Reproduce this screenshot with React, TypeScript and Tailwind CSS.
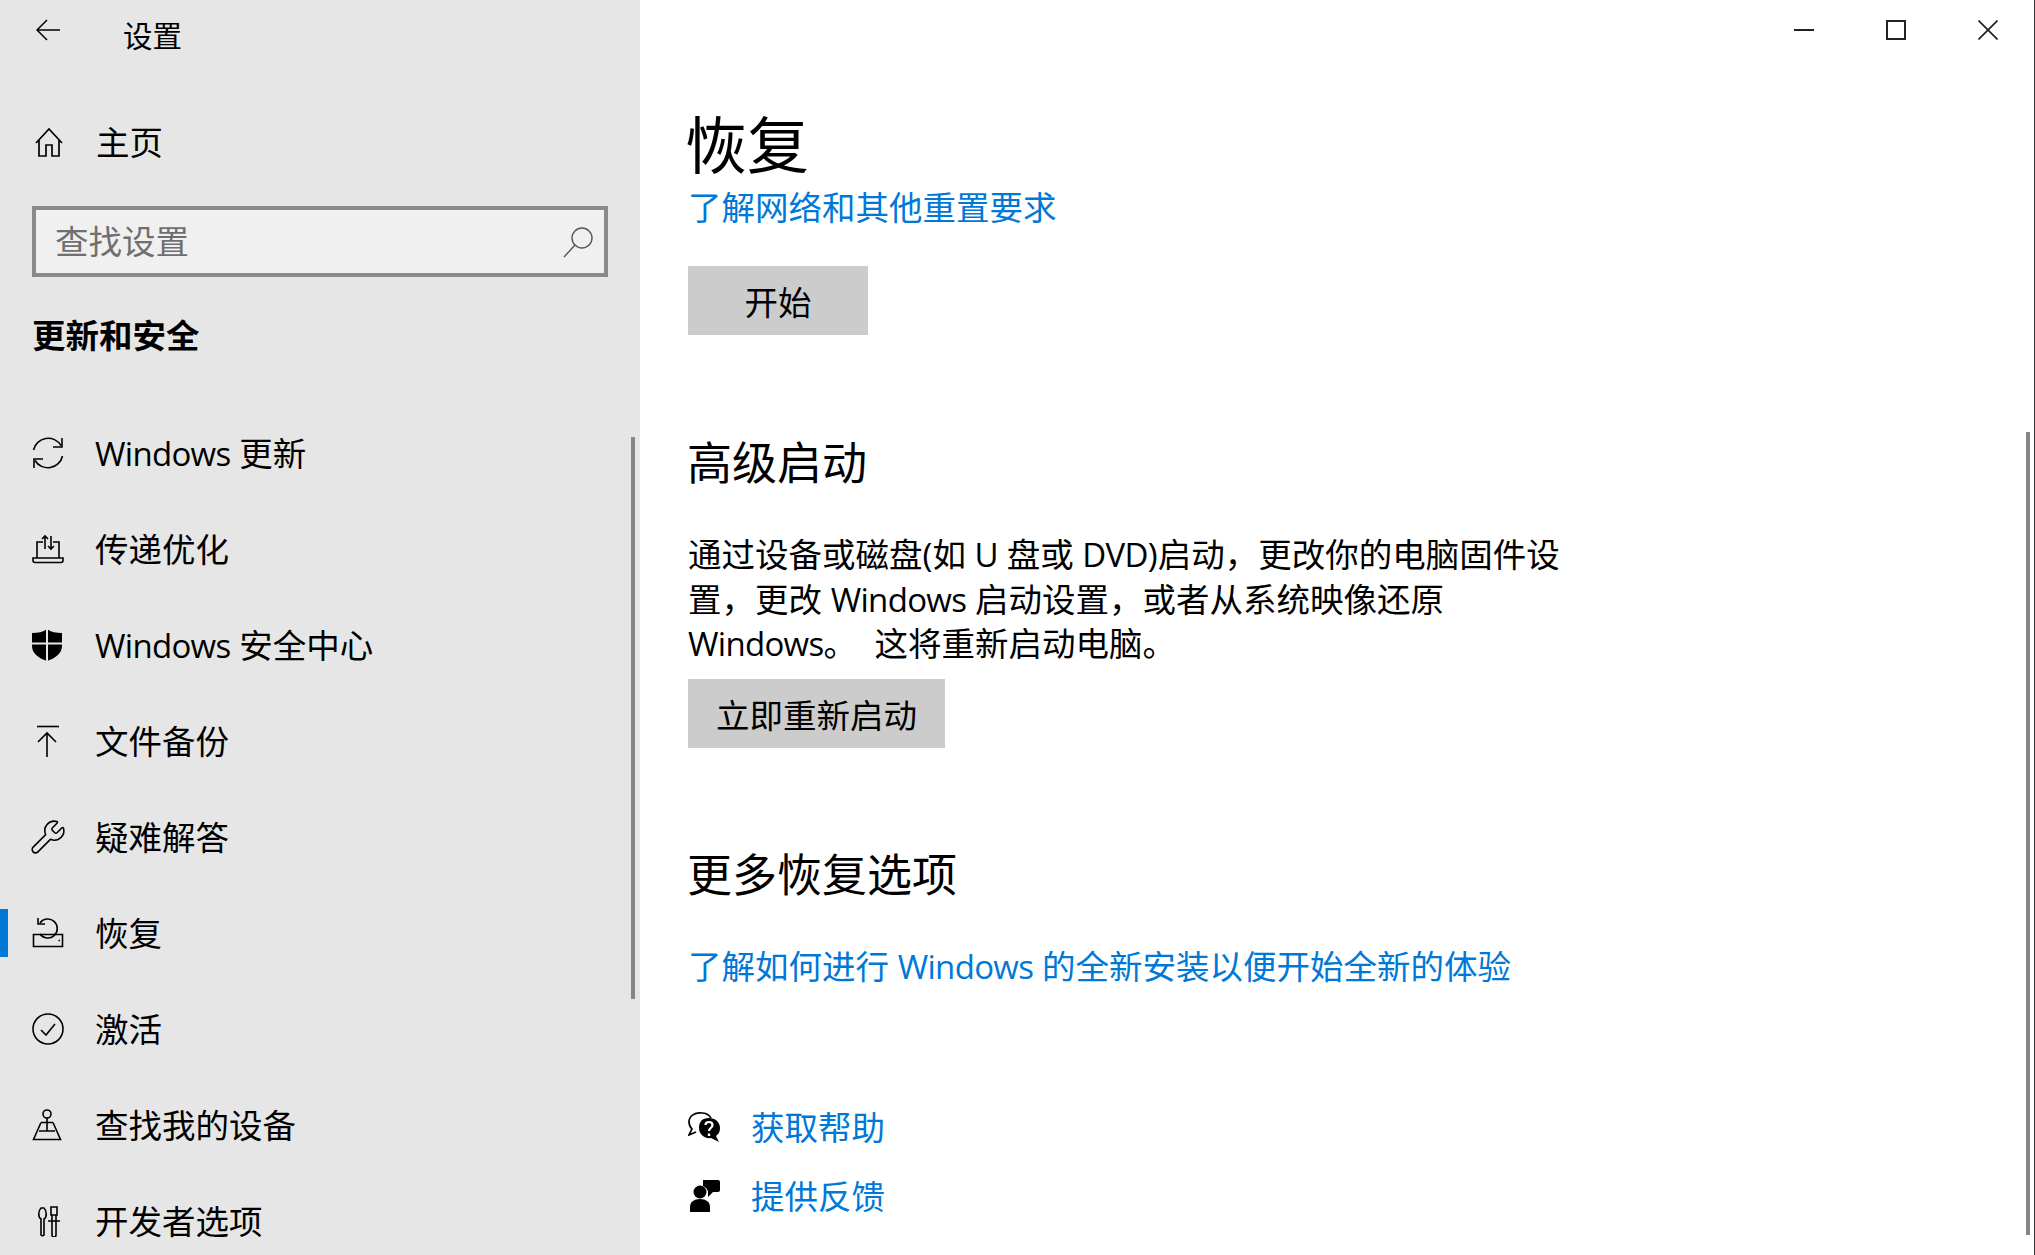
import React from "react";
import { Wrench } from "lucide-react";

type IconProps = { className?: string };

const Svg: React.FC<{ className?: string; children: React.ReactNode }> = ({ className, children }) => (
  <svg
    viewBox="0 0 32 32"
    fill="none"
    stroke="currentColor"
    strokeWidth="1.6"
    className={className ?? "w-8 h-8"}
  >
    {children}
  </svg>
);

const SyncIcon = () => (
  <Svg>
    <path d="M1.5 13A15 15 0 0 1 29 8.5" />
    <path d="M30 1v9h-9" />
    <path d="M30.5 19A15 15 0 0 1 3 23.5" />
    <path d="M2 31v-9h9" />
  </Svg>
);

const DeliveryIcon = () => (
  <Svg>
    <path d="M5 25V9h6M21 9h6v16" />
    <path d="M13 16V3M10 6l3-3 3 3M19 3v13M16 13l3 3 3-3" />
    <path d="M1 25h30v2.5a2 2 0 0 1-2 2H3a2 2 0 0 1-2-2z" />
  </Svg>
);

const ShieldIcon = () => (
  <svg viewBox="0 0 32 32" className="w-8 h-8">
    <path d="M15 0 C19 3 24 4 30 4 V17 C30 24 24 29 15 32 C6 29 0 24 0 17 V4 C6 4 11 3 15 0Z" fill="#000" />
    <path d="M15 0V32M0 14.5H30" stroke="#e6e6e6" strokeWidth="2" />
  </svg>
);

const BackupIcon = () => (
  <Svg>
    <path d="M5 1.5h22" />
    <path d="M15 33V9M6 17l9-9 9 9" />
  </Svg>
);

const RecoveryIcon = () => (
  <Svg>
    <path d="M1.5 17.5h29v12h-29z" />
    <path d="M8 17a9.5 9.5 0 1 0 0-11" />
    <path d="M6 1v6h7" />
    <path d="M26.5 23.5h1.5" />
  </Svg>
);

const ActivateIcon = () => (
  <Svg>
    <circle cx="16" cy="16" r="15" />
    <path d="M9 17l5 5 9-11" />
  </Svg>
);

const FindIcon = () => (
  <Svg>
    <circle cx="15" cy="5" r="4" />
    <path d="M15 9v13M9 13.5h12M9 13.5L1.5 30.5h27L21 13.5M7 22h16" />
  </Svg>
);

const DevIcon = () => (
  <Svg>
    <path d="M9 30a2 2 0 0 0 3 0V14c3-2 3-8 0-11h-3c-3 3-3 9 0 11z" />
    <path d="M20 30a2 2 0 0 0 4 0V10h-4zM19 2h6v8h-6zM16 16h12" />
  </Svg>
);

const WrenchIcon = ({ className }: IconProps) => (
  <Wrench size={38} strokeWidth={1} className={`shrink-0 max-w-none ${className ?? ""}`} />
);

const HelpIcon = () => (
  <svg viewBox="0 0 32 32" className="w-8 h-8 shrink-0">
    <path
      d="M14 2C7 1 1 5 1 11c0 3 1 5 3 7L1 24l7-3"
      fill="none"
      stroke="#000"
      strokeWidth="1.7"
    />
    <path d="M14 2c4 0 7 2 9 5" fill="none" stroke="#000" strokeWidth="1.7" />
    <path d="M21 7c6 0 11 4 11 10 0 3-1 6-4 8l3 6-8-4c-7 1-12-4-12-10S14 7 21 7z" fill="#000" />
    <path
      d="M17.5 14c0-4 7-4 7 0 0 3-3.5 3-3.5 6"
      fill="none"
      stroke="#fff"
      strokeWidth="2.2"
    />
    <path d="M19.8 22.5h2.4v2.5h-2.4z" fill="#fff" />
  </svg>
);

const FeedbackIcon = () => (
  <svg viewBox="0 0 32 32" className="w-8 h-8 shrink-0">
    <circle cx="12" cy="12" r="6.5" fill="#000" />
    <path d="M2 32v-5c0-5 4-8 10-8s10 3 10 8v5z" fill="#000" />
    <path d="M15 0h15a2 2 0 0 1 2 2v8a2 2 0 0 1-2 2h-5l-5 5v-5.5a8.5 8.5 0 0 0-5-5.5z" fill="#000" />
  </svg>
);

// 西文部分收紧字距，宽度才接近原图
const Latin: React.FC<{ children: React.ReactNode }> = ({ children }) => (
  <span className="text-[33px] leading-none tracking-[-0.7px]">{children}</span>
);

const navItems: { label: React.ReactNode; icon: React.ReactNode; active?: boolean }[] = [
  { label: <><Latin>Windows</Latin> 更新</>, icon: <SyncIcon /> },
  { label: "传递优化", icon: <DeliveryIcon /> },
  { label: <><Latin>Windows</Latin> 安全中心</>, icon: <ShieldIcon /> },
  { label: "文件备份", icon: <BackupIcon /> },
  { label: "疑难解答", icon: <WrenchIcon /> },
  { label: "恢复", icon: <RecoveryIcon />, active: true },
  { label: "激活", icon: <ActivateIcon /> },
  { label: "查找我的设备", icon: <FindIcon /> },
  { label: "开发者选项", icon: <DevIcon /> },
];

export default function App() {
  return (
    <div className="flex h-[1255px] w-full overflow-hidden bg-white text-black font-['Open_Sans','Noto_Sans_CJK_SC',sans-serif] font-normal text-[33.5px]">
      {/* 左侧导航 */}
      <aside className="relative w-[640px] shrink-0 bg-[#e6e6e6]">
        <div className="flex h-[72px] items-center">
          <svg viewBox="0 0 24 22" fill="none" stroke="#000" strokeWidth="1.5" className="ml-[36px] w-6 h-[22px] -mt-3">
            <path d="M24 11H1M11 1L1 11l10 10" />
          </svg>
          <span className="ml-[63px] pt-[1px] text-[29.5px]">设置</span>
        </div>

        <div className="mt-[22px] flex h-[96px] items-center pl-[32px]">
          <svg viewBox="0 0 32 32" fill="none" stroke="#000" strokeWidth="1.7" className="ml-[1px] w-8 h-8">
            <path d="M3 17L16 3l13 14M6 14v16h7V19h6v11h7V14" />
          </svg>
          <span className="ml-[31px]">主页</span>
        </div>

        <div className="mx-[32px] mt-[16px] flex h-[71px] items-center justify-between border-4 border-[#8a8a8a] bg-[#f0f0f0] pl-[19px] pr-[10px]">
          <span className="text-[#6f6f6f]">查找设置</span>
          <svg viewBox="0 0 32 32" fill="none" stroke="#555" strokeWidth="1.4" className="w-8 h-8">
            <circle cx="20" cy="12" r="10" />
            <path d="M13 19L2 31" />
          </svg>
        </div>

        <div className="mt-[34px] mb-[46px] flex h-[48px] items-center pl-[32px] font-bold">更新和安全</div>

        <nav>
          {navItems.map((item, i) => (
            <div key={i} className="relative flex h-[96px] items-center pl-[32px]">
              {item.active && <div className="absolute left-0 top-[24px] h-[48px] w-[8px] bg-[#0078d7]" />}
              <div className="flex w-8 h-8 items-center justify-center">{item.icon}</div>
              <span className="ml-[31px] whitespace-nowrap">{item.label}</span>
            </div>
          ))}
        </nav>

        {/* 滚动条 */}
        <div className="absolute left-[631px] top-[437px] h-[562px] w-[4px] bg-[#858585]" />
      </aside>

      {/* 右侧内容 */}
      <main className="relative flex-1 border-r border-[#333]">
        <div className="flex h-[60px] justify-end">
          <div className="flex w-[92px] items-center justify-center">
            <div className="h-[2px] w-[20px] bg-[#222]" />
          </div>
          <div className="flex w-[92px] items-center justify-center">
            <div className="h-[20px] w-[20px] border-2 border-[#222]" />
          </div>
          <div className="flex w-[92px] items-center justify-center">
            <svg viewBox="0 0 20 20" stroke="#222" strokeWidth="1.7" className="w-5 h-5">
              <path d="M0.5 0.5l19 19M19.5 0.5l-19 19" />
            </svg>
          </div>
        </div>

        <div className="pl-[48px]">
          <h1 className="-ml-[3px] mt-[43px] h-[84px] text-[62px] leading-[84px] font-normal">恢复</h1>
          <a className="-mt-[2px] block h-[45px] leading-[45px] text-[#0078d7]">了解网络和其他重置要求</a>
          <button className="mt-[36px] block h-[69px] w-[180px] bg-[#cccccc] pt-[3px] text-center">开始</button>

          <h2 className="-ml-[1px] mt-[98px] h-[60px] text-[45px] leading-[60px] font-normal">高级启动</h2>
          <p className="mt-[39px] w-[885px] leading-[44.5px]">
            通过设备或磁盘(如 <Latin>U</Latin> 盘或 <Latin>DVD</Latin>)启动，更改你的电脑固件设置，更改 <Latin>Windows</Latin> 启动设置，或者从系统映像还原 <Latin>Windows</Latin>。&nbsp; 这将重新启动电脑。
          </p>
          <button className="mt-[13.5px] block h-[69px] w-[257px] bg-[#cccccc] pt-[3px] text-center">立即重新启动</button>

          <h2 className="-ml-[1px] mt-[97px] h-[60px] text-[45px] leading-[60px] font-normal">更多恢复选项</h2>
          <a className="mt-[39px] block h-[45px] leading-[45px] text-[#0078d7]">了解如何进行 <Latin>Windows</Latin> 的全新安装以便开始全新的体验</a>

          <div className="mt-[108px] flex h-[60px] items-center">
            <HelpIcon />
            <a className="ml-[31px] text-[#0078d7]">获取帮助</a>
          </div>
          <div className="mt-[9px] flex h-[60px] items-center">
            <FeedbackIcon />
            <a className="ml-[31px] text-[#0078d7]">提供反馈</a>
          </div>
        </div>

        <div className="absolute left-[1386px] top-[432px] h-[803px] w-[4px] bg-[#858585]" />
      </main>
    </div>
  );
}
